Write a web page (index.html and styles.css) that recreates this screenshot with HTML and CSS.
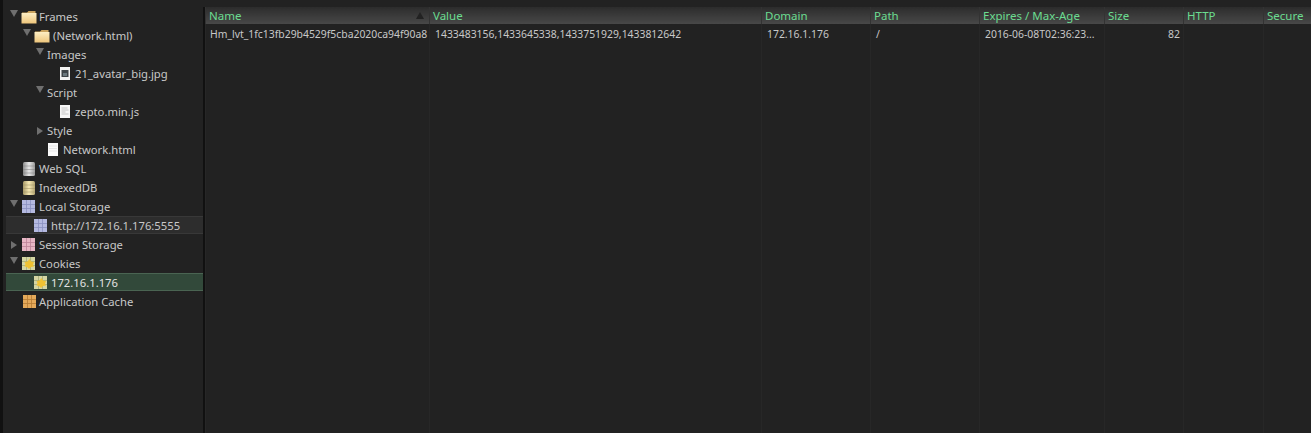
FILE: index.html
```html
<!DOCTYPE html>
<html lang="en">
<head>
    <meta charset="UTF-8">
    <title>Resources</title>
    <link rel="stylesheet" href="styles.css">
</head>
<body>

<svg class="defs" width="0" height="0">
    <defs>
        <linearGradient id="folder-fill" x1="0" y1="0" x2="0" y2="1">
            <stop offset="0" stop-color="#fdeec4"/>
            <stop offset="1" stop-color="#eec67c"/>
        </linearGradient>
        <linearGradient id="sql-fill" x1="0" y1="0" x2="1" y2="0">
            <stop offset="0" stop-color="#8c8c8c"/>
            <stop offset="0.5" stop-color="#e8e8e8"/>
            <stop offset="1" stop-color="#9a9a9a"/>
        </linearGradient>
        <linearGradient id="idb-fill" x1="0" y1="0" x2="1" y2="0">
            <stop offset="0" stop-color="#a89a68"/>
            <stop offset="0.5" stop-color="#f6e9b4"/>
            <stop offset="1" stop-color="#b3a472"/>
        </linearGradient>
        <symbol id="i-folder" viewBox="0 0 16 14">
            <path d="M1 2.500h5l1.500-1.500h7v2H1z" fill="#c9a35f"/>
            <rect x="0.500" y="3" width="15" height="10.500" fill="url(#folder-fill)"/>
        </symbol>
        <symbol id="i-image" viewBox="0 0 10 13">
            <rect width="10" height="13" fill="#f2f2f2"/>
            <rect x="1.500" y="3" width="7" height="7" fill="#3d4347"/>
            <rect x="3" y="6" width="4" height="3" fill="#69767c"/>
        </symbol>
        <symbol id="i-script" viewBox="0 0 10 13">
            <rect width="10" height="13" fill="#f6f6f6"/>
            <path d="M1.500 3h6M1.500 5h7M1.500 7h4M1.500 9h7" stroke="#b9b9b9" stroke-width="0.800"/>
        </symbol>
        <symbol id="i-page" viewBox="0 0 10 13">
            <rect width="10" height="13" fill="#fafafa"/>
            <path d="M1 3h8M1 5.500h8M1 8h8" stroke="#ddd" stroke-width="0.700"/>
        </symbol>
        <symbol id="i-sql" viewBox="0 0 12 14">
            <rect width="12" height="14" rx="1.500" fill="url(#sql-fill)"/>
            <path d="M0 4h12M0 7.500h12M0 11h12" stroke="#7e7e7e" stroke-width="0.500"/>
        </symbol>
        <symbol id="i-idb" viewBox="0 0 12 14">
            <rect width="12" height="14" rx="1.500" fill="url(#idb-fill)"/>
            <path d="M0 4h12M0 7.500h12M0 11h12" stroke="#9a8d60" stroke-width="0.500"/>
        </symbol>
        <symbol id="i-local" viewBox="0 0 13 13">
            <rect width="13" height="13" fill="#b4b9e0"/>
            <path d="M0 4.500h13M0 8.500h13M4.500 0v13M8.500 0v13" stroke="#8a90c0" stroke-width="0.800"/>
        </symbol>
        <symbol id="i-session" viewBox="0 0 13 13">
            <rect width="13" height="13" fill="#e6b6c4"/>
            <path d="M0 4.500h13M0 8.500h13M4.500 0v13M8.500 0v13" stroke="#bd8498" stroke-width="0.800"/>
        </symbol>
        <symbol id="i-cookie" viewBox="0 0 13 13">
            <rect width="13" height="13" fill="#d5d6a4"/>
            <path d="M0 4.500h13M0 8.500h13M4.500 0v13M8.500 0v13" stroke="#9ea670" stroke-width="0.700"/>
            <path d="M7.500 2l1.500 2.500 3 .5-1 2.500 1 2-3 .5-2 2-2-2-2.500-.5 1-2.500-1-2 3-.5z" fill="#efc233"/>
        </symbol>
        <symbol id="i-cache" viewBox="0 0 13 13">
            <rect width="13" height="13" fill="#e4a95a"/>
            <path d="M0 4.500h13M0 8.500h13M4.500 0v13M8.500 0v13" stroke="#b57c35" stroke-width="0.800"/>
        </symbol>
    </defs>
</svg>

<div class="panel">
    <aside class="tree">
        <div class="tree-row lv0"><span class="twisty open"></span><svg class="icon folder"><use href="#i-folder"/></svg><span class="label">Frames</span></div>
        <div class="tree-row lv1"><span class="twisty open"></span><svg class="icon folder"><use href="#i-folder"/></svg><span class="label wide">(Network.html)</span></div>
        <div class="tree-row lv2"><span class="twisty open"></span><span class="label">Images</span></div>
        <div class="tree-row lv3"><svg class="icon doc"><use href="#i-image"/></svg><span class="label">21_avatar_big.jpg</span></div>
        <div class="tree-row lv2"><span class="twisty open"></span><span class="label">Script</span></div>
        <div class="tree-row lv3"><svg class="icon doc"><use href="#i-script"/></svg><span class="label">zepto.min.js</span></div>
        <div class="tree-row lv2"><span class="twisty closed"></span><span class="label">Style</span></div>
        <div class="tree-row lv2b"><svg class="icon doc"><use href="#i-page"/></svg><span class="label">Network.html</span></div>
        <div class="tree-row lv0 no-twisty"><svg class="icon db"><use href="#i-sql"/></svg><span class="label">Web SQL</span></div>
        <div class="tree-row lv0 no-twisty"><svg class="icon db"><use href="#i-idb"/></svg><span class="label">IndexedDB</span></div>
        <div class="tree-row lv0"><span class="twisty open"></span><svg class="icon grid"><use href="#i-local"/></svg><span class="label">Local Storage</span></div>
        <div class="tree-row lv1 child hover"><svg class="icon grid"><use href="#i-local"/></svg><span class="label">http://172.16.1.176:5555</span></div>
        <div class="tree-row lv0"><span class="twisty closed"></span><svg class="icon grid"><use href="#i-session"/></svg><span class="label">Session Storage</span></div>
        <div class="tree-row lv0"><span class="twisty open"></span><svg class="icon grid"><use href="#i-cookie"/></svg><span class="label">Cookies</span></div>
        <div class="tree-row lv1 child selected"><svg class="icon grid"><use href="#i-cookie"/></svg><span class="label">172.16.1.176</span></div>
        <div class="tree-row lv0 no-twisty"><svg class="icon grid"><use href="#i-cache"/></svg><span class="label">Application Cache</span></div>
    </aside>

    <main class="cookies">
        <table class="cookie-table">
            <colgroup>
                <col class="c-name"><col class="c-value"><col class="c-domain"><col class="c-path">
                <col class="c-expires"><col class="c-size"><col class="c-http"><col class="c-secure">
            </colgroup>
            <thead>
                <tr>
                    <th class="sorted">Name</th>
                    <th>Value</th>
                    <th>Domain</th>
                    <th>Path</th>
                    <th>Expires / Max-Age</th>
                    <th>Size</th>
                    <th>HTTP</th>
                    <th>Secure</th>
                </tr>
            </thead>
            <tbody>
                <tr class="data-row">
                    <td>Hm_lvt_1fc13fb29b4529f5cba2020ca94f90a8</td>
                    <td>1433483156,1433645338,1433751929,1433812642</td>
                    <td>172.16.1.176</td>
                    <td>/</td>
                    <td>2016-06-08T02:36:23...</td>
                    <td class="num">82</td>
                    <td></td>
                    <td></td>
                </tr>
                <tr class="filler-row">
                    <td></td><td></td><td></td><td></td><td></td><td></td><td></td><td></td>
                </tr>
            </tbody>
        </table>
    </main>
</div>

</body>
</html>
```

FILE: styles.css
```css
html, body {
    height: 100%;
}
body {
    margin: 0;
    background-color: #232323;
    color: #c8c8c8;
    font-family: 'Noto Sans', 'Open Sans', sans-serif;
    font-size: 11.25px;
    overflow: hidden;
}
.defs {
    position: absolute;
}
.panel {
    display: flex;
    height: 100%;
    box-sizing: border-box;
    padding-top: 7px;
    border-left: 3px solid #111;
    background-color: #222;
}
/* left tree */
.tree {
    width: 200px;
    flex-shrink: 0;
    border-right: 2px solid #111;
}
.tree-row {
    display: flex;
    align-items: center;
    height: 19px;
    white-space: nowrap;
}
.lv0 { padding-left: 7px; }
.lv1 { padding-left: 20px; }
.lv2 { padding-left: 33px; }
.lv2b { padding-left: 45px; }
.lv3 { padding-left: 57px; }
.no-twisty { padding-left: 20px; }
.child {
    margin-left: 3px;
    padding-left: 28px;
    height: 18px;
    margin-bottom: 1px;
}
.twisty {
    width: 0;
    height: 0;
    margin-right: 3px;
    margin-top: -6px;
}
.twisty.open {
    border-left: 4px solid transparent;
    border-right: 4px solid transparent;
    border-top: 7px solid #6f6f6f;
}
.twisty.closed {
    margin: 0 4px 0 1px;
    border-top: 4px solid transparent;
    border-bottom: 4px solid transparent;
    border-left: 6px solid #6f6f6f;
}
.icon {
    flex-shrink: 0;
}
.icon.folder {
    width: 16px;
    height: 14px;
    margin-right: 2px;
}
.icon.doc {
    width: 10px;
    height: 13px;
    margin-right: 5px;
}
.icon.db {
    width: 12px;
    height: 14px;
    margin-right: 4px;
}
.icon.grid {
    width: 13px;
    height: 13px;
    margin-right: 4px;
}
.twisty + .icon.grid {
    margin-left: 1px;
}
.no-twisty .icon.grid {
    margin-right: 3px;
}
.label.wide {
    margin-left: 1px;
}
.hover {
    background-color: #2d2d2d;
    box-shadow: inset 0 1px #383838, inset 0 -1px #383838;
}
.selected {
    background-color: #32493a;
    box-shadow: inset 0 1px #4a6452, inset 0 -1px #4a6452;
    color: #e2e2e2;
}
/* cookie table */
.cookies {
    flex: 1;
    min-width: 0;
}
.cookie-table {
    width: 100%;
    height: 100%;
    table-layout: fixed;
    border-collapse: collapse;
}
.c-name { width: 224px; }
.c-value { width: 332px; }
.c-domain { width: 109px; }
.c-path { width: 109px; }
.c-expires { width: 125px; }
.c-size { width: 79px; }
.c-http { width: 80px; }
.c-secure { width: 48px; }
.cookie-table th {
    height: 17px;
    padding: 0 3px;
    background: linear-gradient(#2c2c2c, #484848);
    color: #6bdc90;
    font-size: 11.5px;
    font-weight: normal;
    text-align: left;
    border-left: 1px solid #333;
    white-space: nowrap;
    overflow: hidden;
}
.cookie-table th.sorted {
    position: relative;
}
.cookie-table th.sorted::after {
    content: "";
    position: absolute;
    right: 5px;
    top: 5px;
    border-left: 4px solid transparent;
    border-right: 4px solid transparent;
    border-bottom: 7px solid #222;
}
.cookie-table td {
    padding: 0 5px;
    font-size: 10.4px;
    border-left: 1px solid #272727;
    white-space: nowrap;
}
.cookie-table td:first-child {
    padding-left: 4px;
}
.data-row td {
    height: 16px;
    padding-top: 2px;
}
.cookie-table td.num {
    text-align: right;
    padding-right: 3px;
}
```
